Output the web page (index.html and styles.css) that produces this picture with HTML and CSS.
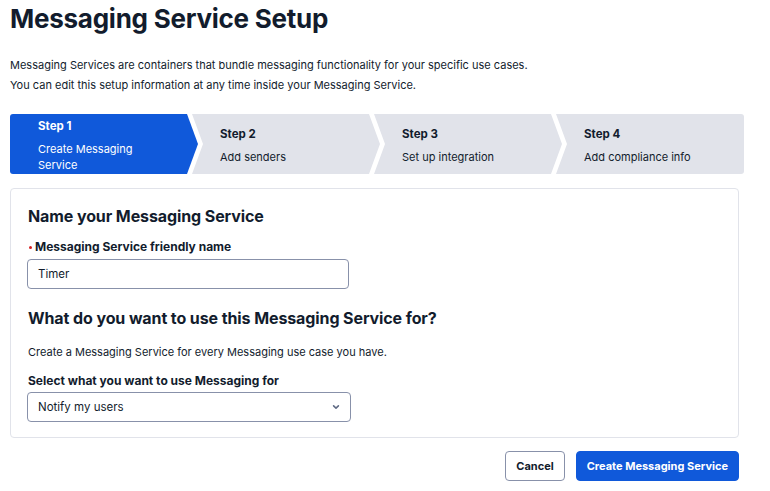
FILE: index.html
```html
<!DOCTYPE html>
<html>
<head>
<meta charset="utf-8">
<link rel="stylesheet" href="styles.css">
</head>
<body>
<main class="page">
  <h1 class="title">Messaging Service Setup</h1>
  <p class="intro">Messaging Services are containers that bundle messaging functionality for your specific use cases.<br>You can edit this setup information at any time inside your Messaging Service.</p>

  <ol class="stepper">
    <li class="step step-first step-active">
      <span class="step-label">Step 1</span>
      <span class="step-desc">Create Messaging Service</span>
    </li>
    <li class="step">
      <span class="step-label">Step 2</span>
      <span class="step-desc">Add senders</span>
    </li>
    <li class="step">
      <span class="step-label">Step 3</span>
      <span class="step-desc">Set up integration</span>
    </li>
    <li class="step step-last">
      <span class="step-label">Step 4</span>
      <span class="step-desc">Add compliance info</span>
    </li>
  </ol>

  <section class="card">
    <h2 class="card-heading">Name your Messaging Service</h2>
    <label class="field-label"><span class="req"></span>Messaging Service friendly name</label>
    <div class="input">Timer</div>

    <h2 class="card-heading heading-2">What do you want to use this Messaging Service for?</h2>
    <p class="help">Create a Messaging Service for every Messaging use case you have.</p>
    <label class="field-label">Select what you want to use Messaging for</label>
    <div class="select">
      <span>Notify my users</span>
      <svg class="chev" width="10" height="10" viewBox="0 0 10 10"><path d="M2.6 3.9 L5 6.1 L7.4 3.9" fill="none" stroke="#606b85" stroke-width="1.6" stroke-linecap="round" stroke-linejoin="round"/></svg>
    </div>
  </section>

  <div class="actions">
    <button class="btn btn-secondary">Cancel</button>
    <button class="btn btn-primary">Create Messaging Service</button>
  </div>
</main>
</body>
</html>
```
FILE: styles.css
```css
* { box-sizing: border-box; }
html, body { margin: 0; padding: 0; background: #fff; }
body {
  font-family: Inter, "Noto Sans", sans-serif;
  color: #121c2d;
  font-size: 11px;
}
.page {
  padding: 0 0 0 10px;
  width: 739px;
}
.title {
  margin: 0;
  font-size: 26px;
  line-height: 38px;
  font-weight: 700;
  letter-spacing: -0.25px;
}
.intro {
  margin: 17px 0 0;
  font-size: 11px;
  line-height: 20px;
}
.stepper {
  list-style: none;
  margin: 19px 0 0;
  padding: 0;
  display: flex;
  width: 734px;
  height: 60px;
}
.step {
  width: 188px;
  flex: none;
  margin-left: -6px;
  height: 60px;
  background: #e1e3ea;
  padding: 0 24px 0 28px;
  display: flex;
  flex-direction: column;
  justify-content: center;
  clip-path: polygon(0 0, calc(100% - 11px) 0, 100% 50%, calc(100% - 11px) 100%, 0 100%, 11px 50%);
}
.step-first {
  margin-left: 0;
  border-radius: 3px 0 0 3px;
  padding-right: 40px;
  clip-path: polygon(0 0, calc(100% - 11px) 0, 100% 50%, calc(100% - 11px) 100%, 0 100%);
}
.step-last {
  border-radius: 0 3px 3px 0;
  clip-path: polygon(0 0, 100% 0, 100% 100%, 0 100%, 11px 50%);
}
.step-active {
  background: #1059da;
  color: #fff;
}
.step-label {
  font-weight: 700;
  font-size: 11.5px;
  line-height: 20px;
  margin-bottom: 5px;
}
.step-desc {
  line-height: 16px;
}
.card {
  margin-top: 14px;
  border: 1px solid #e1e3ea;
  border-radius: 4px;
  padding: 15px 16px 15px 16px;
}
.card-heading {
  margin: 0;
  font-size: 16px;
  line-height: 24px;
  font-weight: 700;
  letter-spacing: -0.1px;
  padding-left: 1px;
}
.heading-2 { margin-top: 17px; }
.field-label {
  display: flex;
  align-items: center;
  margin-top: 9px;
  font-size: 12px;
  font-weight: 700;
  line-height: 20px;
  padding-left: 1px;
}
.req {
  width: 3px;
  height: 3px;
  border-radius: 50%;
  background: #d61f1f;
  margin: 0 3px 0 1px;
}
.input, .select {
  margin-top: 2px;
  height: 30px;
  border: 1px solid #8891aa;
  border-radius: 4px;
  padding: 0 10px;
  display: flex;
  align-items: center;
  line-height: 20px;
  font-size: 11.5px;
}
.input { width: 322px; }
.select {
  width: 324px;
  justify-content: space-between;
  margin-top: 1px;
}
.chev { margin-right: -1px; }
.help {
  margin: 12px 0 0;
  line-height: 20px;
  padding-left: 1px;
}
.actions {
  display: flex;
  justify-content: flex-end;
  gap: 11px;
  margin-top: 13px;
}
.btn {
  height: 30px;
  border-radius: 4px;
  font-family: inherit;
  font-size: 11px;
  font-weight: 700;
  padding: 0 10px;
  cursor: pointer;
}
.btn-secondary {
  background: #fff;
  border: 1px solid #8891aa;
  color: #121c2d;
}
.btn-primary {
  background: #1059da;
  border: 1px solid #1059da;
  color: #fff;
}
```
